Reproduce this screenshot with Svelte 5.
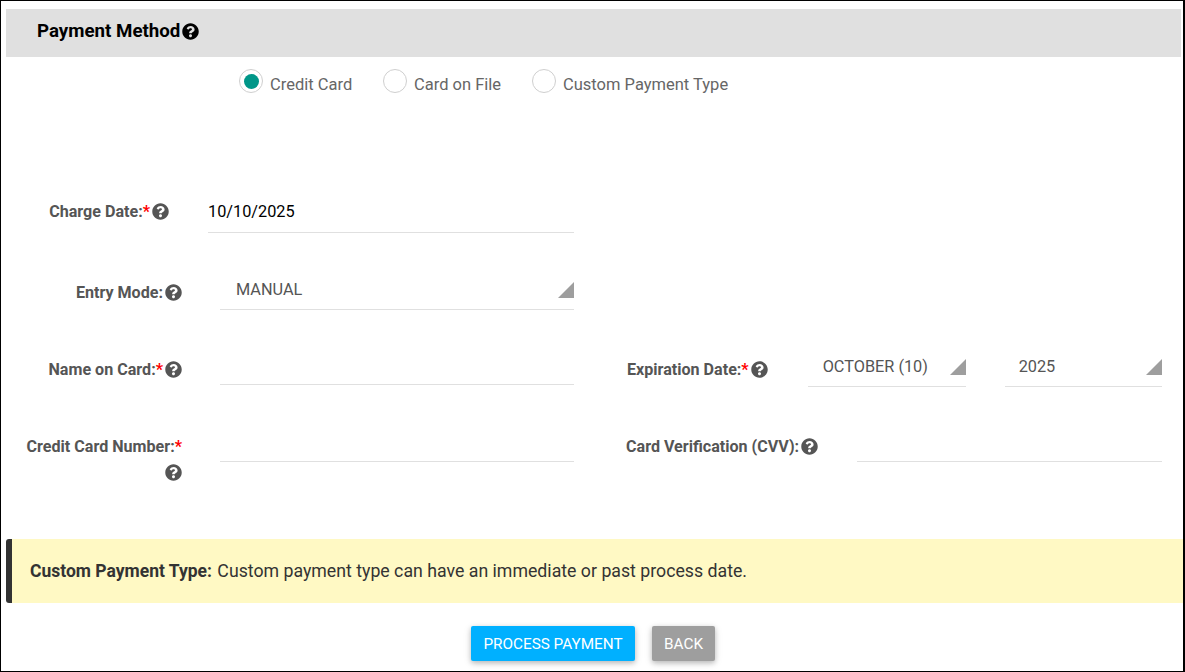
<script>
  const q = "M504 256c0 136.997-111.043 248-248 248S8 392.997 8 256C8 119.083 119.043 8 256 8s248 111.083 248 248zM262.655 90c-54.497 0-89.255 22.957-116.549 63.758-3.536 5.286-2.353 12.415 2.715 16.258l34.699 26.31c5.205 3.947 12.621 3.008 16.665-2.122 17.864-22.658 30.113-35.797 57.303-35.797 20.429 0 45.698 13.148 45.698 32.958 0 14.976-12.363 22.667-32.534 33.976C247.128 238.528 216 254.941 216 296v4c0 6.627 5.373 12 12 12h56c6.627 0 12-5.373 12-12v-1.333c0-28.462 83.186-29.647 83.186-106.667 0-58.002-60.165-102-116.531-102zM256 338c-25.365 0-46 20.635-46 46 0 25.364 20.635 46 46 46s46-20.636 46-46c0-25.365-20.635-46-46-46z";
</script>

{#snippet help(cls = "")}
  <svg class="help {cls}" viewBox="0 0 512 512" aria-hidden="true"><path d={q} /></svg>
{/snippet}

{#snippet tri()}
  <svg class="tri" viewBox="0 0 16 16" aria-hidden="true"><polygon points="16,0 16,16 0,16" /></svg>
{/snippet}

<div class="page">
  <header class="head">
    <h2>Payment Method</h2>
    {@render help("head-help")}
  </header>

  <div class="radios">
    <label class="radio r1"><span class="dot on"></span><span class="rtext">Credit Card</span></label>
    <label class="radio r2"><span class="dot"></span><span class="rtext">Card on File</span></label>
    <label class="radio r3"><span class="dot"></span><span class="rtext">Custom Payment Type</span></label>
  </div>

  <div class="row row1">
    <div class="left">
      <div class="lbl l-charge">Charge Date:<i>*</i>{@render help()}</div>
      <div class="input charge">10/10/2025</div>
    </div>
  </div>

  <div class="row row2">
    <div class="left">
      <div class="lbl l-std">Entry Mode:{@render help()}</div>
      <div class="select entry">MANUAL{@render tri()}</div>
    </div>
  </div>

  <div class="row row3">
    <div class="left">
      <div class="lbl l-std">Name on Card:<i>*</i>{@render help()}</div>
      <div class="input name"></div>
    </div>
    <div class="right">
      <div class="lbl l-exp">Expiration Date:<i>*</i>{@render help()}</div>
      <div class="select month">OCTOBER (10){@render tri()}</div>
      <div class="select year">2025{@render tri()}</div>
    </div>
  </div>

  <div class="row row4">
    <div class="left">
      <div class="lbl l-std l-card">Credit Card Number:<i>*</i>{@render help()}</div>
      <div class="input card"></div>
    </div>
    <div class="right">
      <div class="lbl l-cvv">Card Verification (CVV):{@render help()}</div>
      <div class="input cvv"></div>
    </div>
  </div>

  <div class="alert">
    <b>Custom Payment Type:</b> <span class="alert-text">Custom payment type can have an immediate or past process date.</span>
  </div>

  <div class="actions">
    <button class="btn primary">PROCESS PAYMENT</button>
    <button class="btn back">BACK</button>
  </div>
</div>

<style>
  :global(body) { margin: 0; background: #fff; }
  .page {
    box-sizing: border-box;
    width: 1185px;
    height: 672px;
    overflow: hidden;
    border: solid #000;
    border-width: 1px 2px 1px 1px;
    font-family: Roboto, "Liberation Sans", sans-serif;
    font-size: 16.3px;
    color: #555;
    background: #fff;
  }
  .head {
    display: flex;
    align-items: center;
    box-sizing: border-box;
    width: 1175px;
    height: 48px;
    margin: 8px 0 0 5px;
    padding: 0 0 4px 31px;
    background: #e0e0e0;
  }
  h2 { margin: 0; font-size: 18.72px; font-weight: 700; color: #000; }
  .help { width: 17px; height: 17px; fill: #555; vertical-align: -3px; margin-left: 2px; }
  :global(.head-help) { fill: #000 !important; margin-left: 4px; }

  .radios { display: flex; margin-top: 12px; padding-left: 238px; height: 24px; }
  .radio { display: flex; align-items: center; color: #666; font-size: 16.5px; }
  .rtext { position: relative; top: 3px; }
  .r1 { width: 144px; }
  .r2 { width: 149px; }
  .dot {
    box-sizing: border-box;
    position: relative;
    width: 24px;
    height: 24px;
    margin-right: 7px;
    border: 1px solid #cfcfcf;
    border-radius: 50%;
    background: #fff;
  }
  .dot.on::after {
    content: "";
    position: absolute;
    inset: 3.5px;
    border-radius: 50%;
    background: #009688;
  }

  .row { display: flex; align-items: flex-start; }
  .row1 { margin-top: 105px; }
  .row2 { margin-top: 43px; }
  .row3 { margin-top: 43px; }
  .row4 { margin-top: 46px; height: 52px; }
  .left { display: flex; width: 573px; flex: none; align-items: flex-start; }
  .right { display: flex; align-items: flex-start; }

  .lbl {
    flex: none;
    box-sizing: border-box;
    font-size: 16.1px;
    font-weight: 700;
    line-height: 26px;
    text-align: right;
    color: #555;
    padding-top: 1px;
    height: 27px;
  }
  .lbl i { font-style: normal; color: #f00; }
  .l-charge { width: 168px; }
  .l-std { width: 181px; margin-top: 3px; }
  .l-card { margin-top: 0; padding-left: 20px; height: auto; }
  .l-exp { margin: 3px 0 0 53px; }
  .l-cvv { margin-left: 52px; }

  .input, .select {
    box-sizing: border-box;
    position: relative;
    border-bottom: 1px solid #e0e0e0;
    line-height: 26px;
    padding-top: 1px;
  }
  .input { flex: 1; }
  .charge { height: 35px; margin-left: 39px; color: #000; }
  .name { height: 32px; margin-left: 38px; }
  .card { height: 29px; margin-left: 38px; }
  .cvv { width: 305px; flex: none; height: 29px; margin-left: 39px; }

  .select { height: 34px; padding-left: 15px; color: #555; }
  .entry { flex: 1; padding-left: 16px; margin-left: 38px; }
  .month { width: 158px; margin-left: 40px; }
  .year { width: 157px; margin-left: 39px; padding-left: 14px; }
  .tri { position: absolute; right: 0; top: 6px; width: 16px; height: 16px; fill: #9e9e9e; }

  .alert {
    box-sizing: border-box;
    height: 64px;
    margin: 54px 0 0 5px;
    padding-left: 18px;
    border-left: 6px solid #333;
    border-radius: 3px 0 0 3px;
    background: #fff9c4;
    color: #333;
    line-height: 65px;
    font-size: 17.5px;
  }
  .alert-text { font-size: 17.73px; margin-left: 1px; }
  .actions { display: flex; justify-content: center; gap: 17px; margin-top: 23px; padding-left: 2px; }
  .btn {
    height: 35px;
    padding: 0;
    border: 0;
    border-radius: 2px;
    color: #fff;
    font: 400 15.3px Roboto, sans-serif;
    box-shadow: 0 2px 5px rgba(0, 0, 0, .2), 0 2px 8px rgba(0, 0, 0, .12);
  }
  .primary { width: 164px; background: #00b0ff; }
  .back { width: 63px; background: #9e9e9e; }
</style>
